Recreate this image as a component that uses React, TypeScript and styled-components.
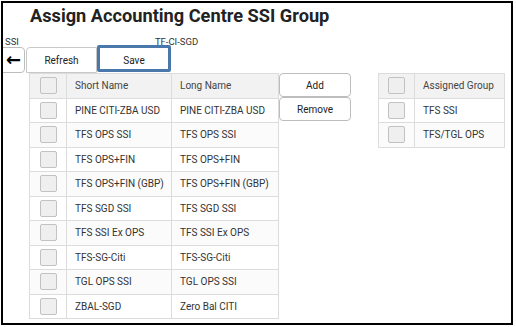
import styled, { createGlobalStyle } from "styled-components";

const GlobalStyle = createGlobalStyle`
  html, body {
    margin: 0;
    padding: 0;
    background: #ffffff;
    font-family: Roboto, "Liberation Sans", sans-serif;
    color: #333333;
  }
`

const Frame = styled.div`
  box-sizing: border-box;
  width: 512px;
  height: 324px;
  margin: 1px 0 0 1px;
  border: 2px solid #000000;
  background: #ffffff;
  overflow: hidden;
`

const Title = styled.h1`
  margin: 0;
  padding-left: 27px;
  height: 26px;
  line-height: 26px;
  font-size: 18.2px;
  font-weight: 700;
  color: #222222;
`

const LabelRow = styled.div`
  display: flex;
  margin-top: 7px;
  height: 11px;
  font-size: 9.5px;
  line-height: 12px;
  color: #333333;
`

const Label = styled.span<{ $left: number }>`
  margin-left: ${p => p.$left}px;
`

const Toolbar = styled.div`
  display: flex;
  align-items: flex-start;
  height: 26px;
`

const BackButton = styled.button`
  box-sizing: border-box;
  width: 23px;
  height: 26px;
  margin-left: -1px;
  padding: 0;
  border: 1px solid #bdbdbd;
  border-radius: 0 4px 4px 0;
  background: #ffffff;
  color: #000000;
  font-size: 18px;
  line-height: 20px;
  font-weight: 700;
  font-family: "DejaVu Sans", sans-serif;
`

const ToolButton = styled.button<{ $active?: boolean }>`
  box-sizing: border-box;
  width: ${p => (p.$active ? 74 : 71)}px;
  height: ${p => (p.$active ? 27 : 26)}px;
  margin-left: ${p => (p.$active ? 0 : 1)}px;
  margin-top: ${p => (p.$active ? -2 : 0)}px;
  padding: ${p => (p.$active ? "3px 0 0" : "0")};
  border: ${p => (p.$active ? "3px solid #4a78ab" : "1px solid #c8c8c8")};
  border-radius: ${p => (p.$active ? "2px" : "4px 0 0 0")};
  background: #ffffff;
  font-family: Roboto, "Liberation Sans", sans-serif;
  font-size: 10px;
  color: #222222;
`

const Content = styled.div`
  display: flex;
  align-items: flex-start;
  margin-left: 26px;
`

const Grid = styled.table<{ $width: number }>`
  width: ${p => p.$width}px;
  border-collapse: collapse;
  table-layout: fixed;
  font-size: 10px;
  color: #333333;
  td, th {
    height: 23.5px;
    padding: 0 0 0 8px;
    border: 1px solid #dcdcdc;
    text-align: left;
    font-weight: 400;
    white-space: nowrap;
    overflow: hidden;
  }
  th {
    background: #f2f2f2;
    color: #444444;
  }
  tbody tr:nth-child(odd) td {
    background: #ffffff;
  }
  tbody tr:nth-child(even) td {
    background: #fbfbfb;
  }
`

const BoxCell = styled.td`
  && {
    padding: 0;
    text-align: center;
  }
`

const BoxHead = styled.th`
  && {
    padding: 0;
    text-align: center;
  }
`

const Box = styled.span`
  display: inline-block;
  box-sizing: border-box;
  width: 17px;
  height: 17px;
  vertical-align: middle;
  border: 1px solid #c2c2c2;
  border-radius: 2px;
  background: #efefef;
`

const SideButtons = styled.div`
  display: flex;
  flex-direction: column;
  width: 72px;
  margin-right: 27px;
`

const SideButton = styled.button`
  box-sizing: border-box;
  height: 24px;
  padding: 0;
  border: 1px solid #bdbdbd;
  border-radius: 4px;
  background: #ffffff;
  font-family: Roboto, "Liberation Sans", sans-serif;
  font-size: 10px;
  color: #222222;
`

const available = [
  ["PINE CITI-ZBA USD", "PINE CITI-ZBA USD"],
  ["TFS OPS SSI", "TFS OPS SSI"],
  ["TFS OPS+FIN", "TFS OPS+FIN"],
  ["TFS OPS+FIN (GBP)", "TFS OPS+FIN (GBP)"],
  ["TFS SGD SSI", "TFS SGD SSI"],
  ["TFS SSI Ex OPS", "TFS SSI Ex OPS"],
  ["TFS-SG-Citi", "TFS-SG-Citi"],
  ["TGL OPS SSI", "TGL OPS SSI"],
  ["ZBAL-SGD", "Zero Bal CITI"],
]

const assigned = ["TFS SSI", "TFS/TGL OPS"]

const App = () => {
  return (
    <>
      <GlobalStyle />
      <Frame>
        <Title>Assign Accounting Centre SSI Group</Title>
        <LabelRow>
          <Label $left={2}>SSI</Label>
          <Label $left={136}>TF-CI-SGD</Label>
        </LabelRow>
        <Toolbar>
          <BackButton aria-label="back">←</BackButton>
          <ToolButton>Refresh</ToolButton>
          <ToolButton $active>Save</ToolButton>
        </Toolbar>
        <Content>
          <Grid $width={249}>
            <colgroup>
              <col style={{ width: 37 }} />
              <col style={{ width: 105 }} />
              <col style={{ width: 107 }} />
            </colgroup>
            <thead>
              <tr>
                <BoxHead><Box /></BoxHead>
                <th>Short Name</th>
                <th>Long Name</th>
              </tr>
            </thead>
            <tbody>
              {available.map(([short, long]) => (
                <tr key={short}>
                  <BoxCell><Box /></BoxCell>
                  <td>{short}</td>
                  <td>{long}</td>
                </tr>
              ))}
            </tbody>
          </Grid>
          <SideButtons>
            <SideButton>Add</SideButton>
            <SideButton>Remove</SideButton>
          </SideButtons>
          <Grid $width={126}>
            <colgroup>
              <col style={{ width: 36 }} />
              <col style={{ width: 90 }} />
            </colgroup>
            <thead>
              <tr>
                <BoxHead><Box /></BoxHead>
                <th>Assigned Group</th>
              </tr>
            </thead>
            <tbody>
              {assigned.map(name => (
                <tr key={name}>
                  <BoxCell><Box /></BoxCell>
                  <td>{name}</td>
                </tr>
              ))}
            </tbody>
          </Grid>
        </Content>
      </Frame>
    </>
  )
}

export default App
